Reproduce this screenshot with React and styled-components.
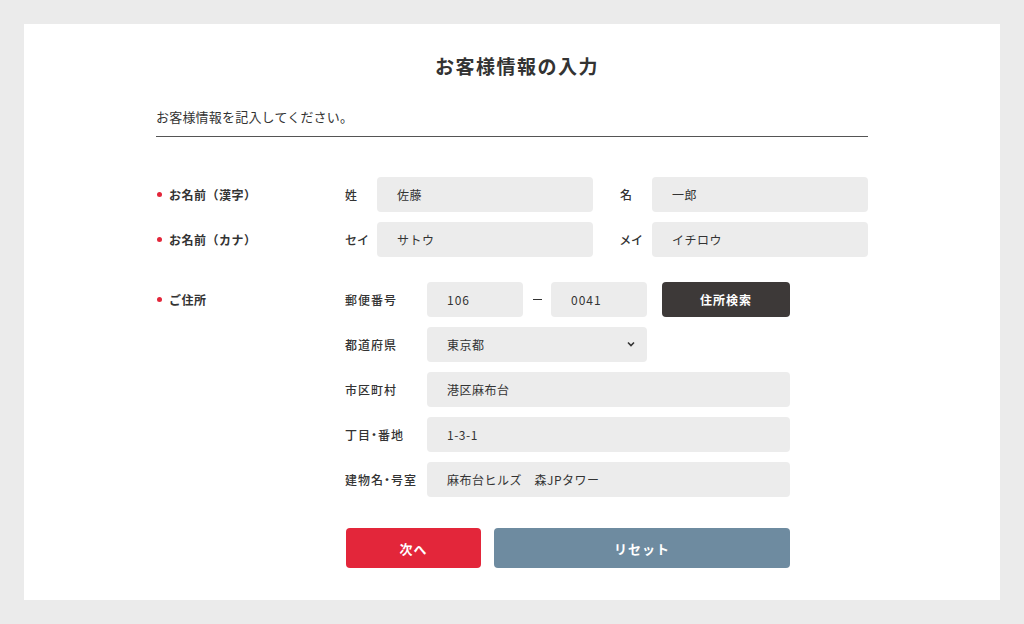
import styled, { createGlobalStyle } from "styled-components";

const GlobalStyle = createGlobalStyle`
  html, body {
    margin: 0;
    padding: 0;
    background: #ebebeb;
  }
  body {
    font-family: "Noto Sans CJK JP", "Noto Sans", sans-serif;
    color: #333;
  }
`;

const Page = styled.div`
  padding: 24px;
  height: 624px;
  box-sizing: border-box;
`;

const Card = styled.div`
  background: #fff;
  height: 576px;
  box-sizing: border-box;
  padding: 29px 132px 0 132px;
`;

const Title = styled.h1`
  margin: 0;
  padding-left: 10px;
  text-align: center;
  font-size: 19px;
  font-weight: 700;
  letter-spacing: 1.5px;
  line-height: 26px;
  color: #333;
`;

const Lead = styled.p`
  margin: 28px 0 0;
  padding-bottom: 9px;
  font-size: 13px;
  line-height: 20px;
  letter-spacing: 0.2px;
  border-bottom: 1px solid #555;
`;

const Form = styled.form`
  margin-top: 40px;
  display: flex;
  flex-direction: column;
`;

const Section = styled.div`
  display: grid;
  grid-template-columns: 189px 1fr;
  margin-top: ${(p) => p.$gap || 0}px;
`;

const Heading = styled.div`
  display: flex;
  align-items: center;
  height: 35px;
  font-size: 12px;
  font-weight: 700;
  letter-spacing: 0.5px;
  &::before {
    content: "";
    width: 5px;
    height: 5px;
    border-radius: 50%;
    background: #e3263a;
    margin: 0 7px 0 1px;
  }
`;

const Rows = styled.div`
  display: flex;
  flex-direction: column;
  gap: 10px;
`;

const Row = styled.div`
  display: flex;
  align-items: center;
  height: 35px;
`;

const Label = styled.span`
  width: ${(p) => p.$w}px;
  flex-shrink: 0;
  font-size: 12px;
  font-weight: 500;
  letter-spacing: 1px;
  font-feature-settings: "palt";
  margin-left: ${(p) => p.$ml || 0}px;
`;

const Field = styled.div`
  width: ${(p) => p.$w}px;
  height: 35px;
  background: #ececec;
  border-radius: 4px;
  display: flex;
  align-items: center;
  padding: 0 20px;
  box-sizing: border-box;
  font-size: 12px;
  letter-spacing: ${(p) => (p.$mono ? "1px" : "0.5px")};
  color: #333;
  position: relative;
`;

const Chevron = styled.svg`
  position: absolute;
  right: 12px;
  top: 14px;
`;

const Dash = styled.span`
  width: 28px;
  display: flex;
  justify-content: center;
  &::before {
    content: "";
    width: 9px;
    height: 1.5px;
    background: #333;
  }
`;

const DarkButton = styled.button`
  margin-left: 15px;
  width: 128px;
  height: 35px;
  border: none;
  border-radius: 4px;
  background: #3d3938;
  color: #fff;
  font-family: inherit;
  font-size: 12px;
  font-weight: 700;
  letter-spacing: 1px;
`;

const Actions = styled.div`
  grid-column: 2;
  display: flex;
  gap: 13px;
  margin-top: 31px;
  margin-left: 1px;
`;

const ActionButton = styled.button`
  width: ${(p) => p.$w}px;
  height: 40px;
  border: none;
  border-radius: 4px;
  background: ${(p) => p.$bg};
  color: #fff;
  font-family: inherit;
  font-size: 13px;
  font-weight: 700;
  letter-spacing: 1px;
`;

const addressRows = [
  { label: "都道府県", value: "東京都", w: 220, select: true },
  { label: "市区町村", value: "港区麻布台", w: 363 },
  { label: "丁目・番地", value: "1-3-1", w: 363 },
  { label: "建物名・号室", value: "麻布台ヒルズ　森JPタワー", w: 363 },
];

function App() {
  return (
    <Page>
      <GlobalStyle />
      <Card>
        <Title>お客様情報の入力</Title>
        <Lead>お客様情報を記入してください。</Lead>
        <Form onSubmit={(e) => e.preventDefault()}>
          <Section>
            <Heading>お名前（漢字）</Heading>
            <Row>
              <Label $w={32}>姓</Label>
              <Field $w={216}>佐藤</Field>
              <Label $w={32} $ml={27}>名</Label>
              <Field $w={216}>一郎</Field>
            </Row>
          </Section>
          <Section $gap={10}>
            <Heading>お名前（カナ）</Heading>
            <Row>
              <Label $w={32}>セイ</Label>
              <Field $w={216}>サトウ</Field>
              <Label $w={32} $ml={27}>メイ</Label>
              <Field $w={216}>イチロウ</Field>
            </Row>
          </Section>
          <Section $gap={25}>
            <Heading>ご住所</Heading>
            <Rows>
              <Row>
                <Label $w={82}>郵便番号</Label>
                <Field $w={96} $mono>106</Field>
                <Dash />
                <Field $w={96} $mono>0041</Field>
                <DarkButton type="button">住所検索</DarkButton>
              </Row>
              {addressRows.map((r) => (
                <Row key={r.label}>
                  <Label $w={82}>{r.label}</Label>
                  <Field $w={r.w}>
                    {r.value}
                    {r.select && (
                      <Chevron width="8" height="6" viewBox="0 0 8 6">
                        <path d="M1 1.5 L4 4.5 L7 1.5" fill="none" stroke="#333" strokeWidth="1.6" />
                      </Chevron>
                    )}
                  </Field>
                </Row>
              ))}
            </Rows>
          </Section>
          <Section>
            <Actions>
              <ActionButton type="button" $w={135} $bg="#e3263a">次へ</ActionButton>
              <ActionButton type="button" $w={296} $bg="#6e8ba0">リセット</ActionButton>
            </Actions>
          </Section>
        </Form>
      </Card>
    </Page>
  );
}

export default App;
